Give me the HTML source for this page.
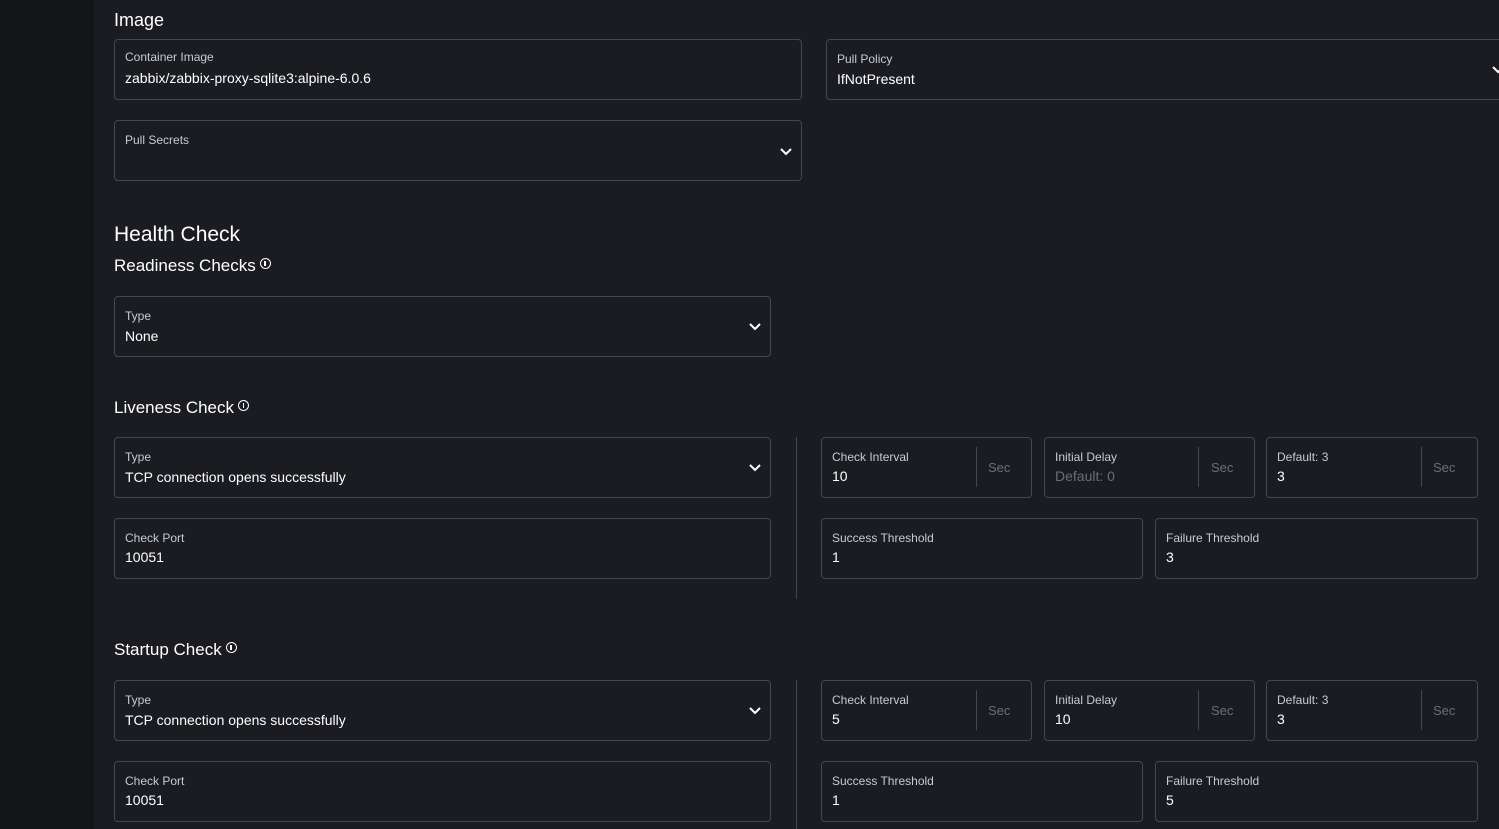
<!DOCTYPE html>
<html><head><style>
body{margin:0;width:1499px;height:829px;overflow:hidden;background:#1b1c21;font-family:"Liberation Sans",sans-serif;color:#fff;position:relative}
.side{position:absolute;left:0;top:0;width:94px;height:829px;background:#141519}
.b{position:absolute;border:1px solid #45474d;border-radius:4px;box-sizing:border-box;height:61px}
.l{position:absolute;left:10px;top:12px;font-size:12px;color:#c9cbd0}
.v{position:absolute;left:10px;top:37px;font-size:14px;color:#fff}
.v.ph{color:#6c6e74}
.d{position:absolute;top:9px;height:40px;border-left:1px solid #45474d}
.s{position:absolute;top:22px;font-size:13px;color:#6c6e74}
.ch{position:absolute;top:25px;width:14px;height:10px}
.h{position:absolute;left:114px;color:#fff}
.vl{position:absolute;left:796px;border-left:1px solid #45474d}
.i{display:inline-block;width:9px;height:9px;border:1.5px solid #fff;border-radius:50%;position:relative;vertical-align:2px;margin-left:4px}
.i:after{content:"";position:absolute;left:3.5px;top:1.5px;width:1.5px;height:5px;background:#fff}
</style></head><body>
<div class="side"></div>
<div class="h" style="top:10px;font-size:18px">Image</div>
<div class="b" style="left:114px;top:39px;width:688px"><div class="l" style="top:10px">Container Image</div><div class="v" style="top:30px">zabbix/zabbix-proxy-sqlite3:alpine-6.0.6</div></div>
<div class="b" style="left:826px;top:39px;width:690px"><div class="l" style="top:12px">Pull Policy</div><div class="v" style="top:31px">IfNotPresent</div><svg class="ch" style="left:664px" viewBox="0 0 14 10"><path d="M2 2l5 5 5-5" stroke="#fff" stroke-width="2" fill="none"/></svg></div>
<div class="b" style="left:114px;top:120px;width:688px"><div class="l" style="top:12px">Pull Secrets</div><svg class="ch" style="left:664px;top:26px" viewBox="0 0 14 10"><path d="M2 2l5 5 5-5" stroke="#fff" stroke-width="2" fill="none"/></svg></div>
<div class="h" style="top:223px;font-size:21px">Health Check</div>
<div class="h" style="top:256px;font-size:17px">Readiness Checks<span class="i"></span></div>
<div class="b" style="left:114px;top:296px;width:657px"><div class="l">Type</div><div class="v" style="top:31px">None</div><svg class="ch" style="left:633px" viewBox="0 0 14 10"><path d="M2 2l5 5 5-5" stroke="#fff" stroke-width="2" fill="none"/></svg></div>

<div class="h" style="top:398px;font-size:17px">Liveness Check<span class="i"></span></div>
<div class="b" style="left:114px;top:437px;width:657px"><div class="l">Type</div><div class="v" style="top:31px">TCP connection opens successfully</div><svg class="ch" style="left:633px" viewBox="0 0 14 10"><path d="M2 2l5 5 5-5" stroke="#fff" stroke-width="2" fill="none"/></svg></div>
<div class="b" style="left:114px;top:518px;width:657px"><div class="l">Check Port</div><div class="v" style="top:30px">10051</div></div>
<div class="vl" style="top:437px;height:162px"></div>
<div class="b" style="left:821px;top:437px;width:211px"><div class="l">Check Interval</div><div class="v" style="top:30px">10</div><div class="d" style="left:154px"></div><div class="s" style="left:166px">Sec</div></div>
<div class="b" style="left:1044px;top:437px;width:211px"><div class="l">Initial Delay</div><div class="v ph" style="top:30px">Default: 0</div><div class="d" style="left:153px"></div><div class="s" style="left:166px">Sec</div></div>
<div class="b" style="left:1266px;top:437px;width:212px"><div class="l">Default: 3</div><div class="v" style="top:30px">3</div><div class="d" style="left:154px"></div><div class="s" style="left:166px">Sec</div></div>
<div class="b" style="left:821px;top:518px;width:322px"><div class="l">Success Threshold</div><div class="v" style="top:30px">1</div></div>
<div class="b" style="left:1155px;top:518px;width:323px"><div class="l">Failure Threshold</div><div class="v" style="top:30px">3</div></div>

<div class="h" style="top:640px;font-size:17px">Startup Check<span class="i"></span></div>
<div class="b" style="left:114px;top:680px;width:657px"><div class="l">Type</div><div class="v" style="top:31px">TCP connection opens successfully</div><svg class="ch" style="left:633px" viewBox="0 0 14 10"><path d="M2 2l5 5 5-5" stroke="#fff" stroke-width="2" fill="none"/></svg></div>
<div class="b" style="left:114px;top:761px;width:657px"><div class="l">Check Port</div><div class="v" style="top:30px">10051</div></div>
<div class="vl" style="top:680px;height:149px"></div>
<div class="b" style="left:821px;top:680px;width:211px"><div class="l">Check Interval</div><div class="v" style="top:30px">5</div><div class="d" style="left:154px"></div><div class="s" style="left:166px">Sec</div></div>
<div class="b" style="left:1044px;top:680px;width:211px"><div class="l">Initial Delay</div><div class="v" style="top:30px">10</div><div class="d" style="left:153px"></div><div class="s" style="left:166px">Sec</div></div>
<div class="b" style="left:1266px;top:680px;width:212px"><div class="l">Default: 3</div><div class="v" style="top:30px">3</div><div class="d" style="left:154px"></div><div class="s" style="left:166px">Sec</div></div>
<div class="b" style="left:821px;top:761px;width:322px"><div class="l">Success Threshold</div><div class="v" style="top:30px">1</div></div>
<div class="b" style="left:1155px;top:761px;width:323px"><div class="l">Failure Threshold</div><div class="v" style="top:30px">5</div></div>
</body></html>
